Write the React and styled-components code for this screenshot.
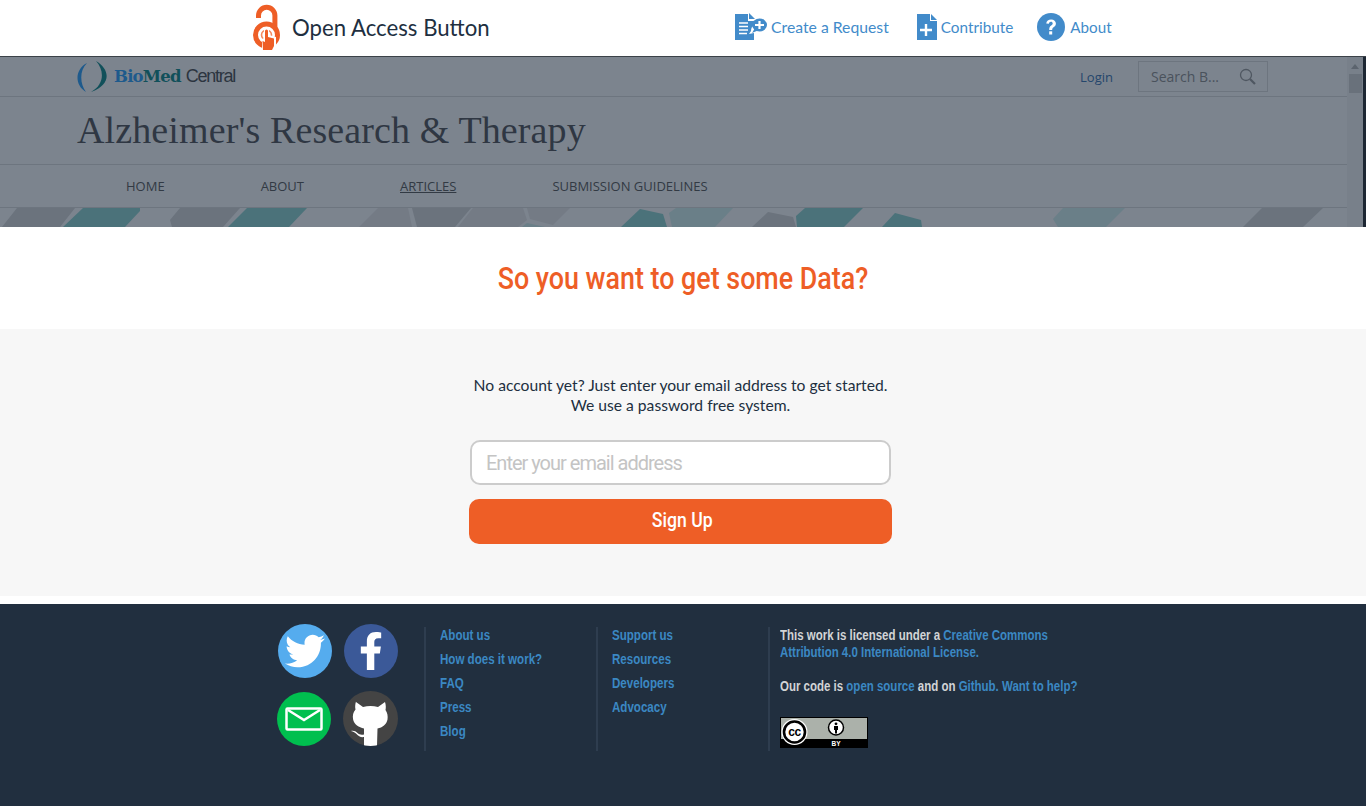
import React from 'react'
import styled, { createGlobalStyle } from 'styled-components'
import { FaTwitter, FaFacebookF } from 'react-icons/fa'

const Global = createGlobalStyle`
  html, body { margin: 0; padding: 0; background: #fff; }
  body { font-family: "Lato", "Liberation Sans", sans-serif; overflow: hidden; }
  a { text-decoration: none; }
`

const Page = styled.div`
  width: 1366px;
  height: 806px;
  overflow: hidden;
`

const TopBar = styled.header`
  height: 57px;
  display: flex;
  align-items: center;
  padding: 0 0 3px 253px;
  box-sizing: border-box;
  background: #fff;
  border-bottom: 1px solid #3b4148;
`

const Brand = styled.a`
  display: flex;
  align-items: center;
  width: 482px;
  padding-top: 2px;
  color: #212f3f;
  font-size: 22.2px;
  svg { margin-right: 11px; }
`

const TopLink = styled.a`
  display: flex;
  align-items: center;
  gap: ${p => p.$gap || 4}px;
  margin-right: ${p => p.$after || 0}px;
  color: #428bca;
  font-size: ${p => p.$font || 15.75}px;
`

const Backdrop = styled.section`
  position: relative;
  height: 170px;
  padding-right: 19px;
  background: #7c848e;
  box-sizing: border-box;
`

const Scroll = styled.div`
  position: absolute;
  top: 0;
  right: 0;
  bottom: 0;
  width: 19px;
  box-sizing: border-box;
  background: #78808a;
  border-right: 3px solid #1d2733;
`

const ScrollArrow = styled.div`
  position: absolute;
  top: 7px;
  left: 4px;
  border: 4px solid transparent;
  border-top-width: 0;
  border-bottom: 5px solid #5c646e;
`

const ScrollThumb = styled.div`
  position: absolute;
  top: 17px;
  left: 2px;
  width: 13px;
  height: 19px;
  background: #69717b;
`

const SiteBar = styled.div`
  height: 39px;
  display: flex;
  align-items: center;
  padding-left: 77px;
  border-bottom: 1px solid #6d757f;
`

const BmcLogo = styled.div`
  display: flex;
  align-items: center;
  flex: 1;
  font-family: "DejaVu Serif", serif;
  svg { margin-right: 5px; }
`

const Bio = styled.span`
  color: ${p => p.$c};
  font-weight: 700;
  font-size: 16.5px;
  letter-spacing: -0.8px;
`

const Central = styled.span`
  margin-left: 5px;
  color: #2c3540;
  font-family: "Liberation Sans", sans-serif;
  font-size: 18px;
  letter-spacing: -1.25px;
`

const Login = styled.a`
  margin-right: 25px;
  color: #24466c;
  font-family: "Open Sans", sans-serif;
  font-size: 13px;
`

const SearchBox = styled.div`
  width: 130px;
  height: 31px;
  margin-right: 79px;
  display: flex;
  align-items: center;
  justify-content: space-between;
  padding: 0 11px 0 12px;
  box-sizing: border-box;
  border: 1px solid #6d757f;
  color: #4a525c;
  font-family: "Open Sans", sans-serif;
  font-size: 14px;
`

const TitleRow = styled.div`
  height: 68px;
  display: flex;
  align-items: center;
  padding: 0 0 2px 77px;
  box-sizing: border-box;
  border-bottom: 1px solid #6d757f;
`

const Title = styled.h1`
  margin: 0;
  color: #2f3743;
  font-family: "Liberation Serif", serif;
  font-size: 38px;
  font-weight: 400;
  letter-spacing: 0.12px;
`

const SiteNav = styled.nav`
  height: 42px;
  display: flex;
  align-items: center;
  padding-left: 126px;
  gap: 96px;
  border-bottom: 1px solid #6d757f;
`

const SiteNavLink = styled.a`
  color: #323a44;
  font-family: "Open Sans", sans-serif;
  font-size: 13px;
  text-decoration: ${p => (p.$active ? 'underline' : 'none')};
`

const Banner = styled.svg`
  display: block;
`

const Intro = styled.div`
  height: 102px;
  display: flex;
  align-items: flex-start;
  justify-content: center;
  background: #fff;
`

const Heading = styled.h2`
  margin: 33px 0 0;
  color: #ee5e26;
  font-family: "Roboto", sans-serif;
  font-size: 31px;
  font-weight: 500;
  line-height: 38px;
  white-space: nowrap;
  transform: scaleX(0.866);
`

const FormArea = styled.section`
  height: 267px;
  display: flex;
  flex-direction: column;
  align-items: center;
  padding-top: 46px;
  padding-right: 5px;
  box-sizing: border-box;
  background: #f7f7f7;
`

const Lead = styled.p`
  margin: 0 0 25px;
  color: #212f3f;
  font-size: 15.65px;
  line-height: 20px;
  text-align: center;
`

const Email = styled.input`
  display: block;
  width: 421px;
  height: 45px;
  padding: 0 14px;
  box-sizing: border-box;
  border: 2px solid #ccc;
  border-radius: 10px;
  background: #fff;
  font-family: "Roboto", sans-serif;
  font-size: 20px;
  letter-spacing: -1px;
  outline: none;
  &::placeholder { color: #c4c4c4; opacity: 1; }
`

const SignUp = styled.button`
  width: 423px;
  height: 45px;
  margin-top: 14px;
  padding: 0 0 3px 3px;
  border: 0;
  border-radius: 10px;
  background: #ee5e26;
  color: #fff;
  font-family: "Roboto", sans-serif;
  font-size: 21px;
  font-weight: 500;
`

const SignUpLabel = styled.span`
  display: inline-block;
  transform: scaleX(0.84);
`

const Footer = styled.footer`
  height: 202px;
  margin-top: 8px;
  display: flex;
  padding: 20px 0 0 277px;
  box-sizing: border-box;
  background: #212f3f;
`

const Social = styled.div`
  display: grid;
  grid-template-columns: 54px 55px;
  grid-auto-rows: 54px;
  column-gap: 13px;
  row-gap: 14px;
  width: 148px;
`

const Round = styled.a`
  width: ${p => p.$size || 54}px;
  height: ${p => p.$size || 54}px;
  margin-top: ${p => p.$up || 0}px;
  margin-left: ${p => p.$right || 0}px;
  display: flex;
  align-items: center;
  justify-content: center;
  overflow: hidden;
  border-radius: 50%;
  background: ${p => p.$bg};
  color: #fff;
`

const FootCol = styled.div`
  width: ${p => p.$w}px;
  height: 124px;
  margin-top: 3px;
  margin-left: ${p => p.$pull || 0}px;
  padding-left: ${p => p.$pad}px;
  box-sizing: border-box;
  border-left: 2px solid #2e3d4f;
  font-family: "Liberation Sans", sans-serif;
  font-weight: 700;
`

const FootLink = styled.a`
  display: block;
  height: 24px;
  color: #3b88c3;
  font-size: 14px;
  line-height: 16px;
  transform: scaleX(0.826);
  transform-origin: 0 50%;
  white-space: nowrap;
`

const FootText = styled.p`
  width: 420px;
  margin: 0 0 17px;
  color: #d2d4d6;
  font-size: 14px;
  line-height: 17px;
  transform: scaleX(0.82);
  transform-origin: 0 50%;
  white-space: nowrap;
  a { color: #3b88c3; }
`

const Badge = styled.svg`
  display: block;
  margin-top: 22px;
`

function OabLogo() {
  return (
    <svg width="28" height="47" viewBox="0 0 28 47">
      <g fill="none" stroke="#ee5e26">
        <path d="M5.5 14V11.5a8.2 8.2 0 0 1 16.4 0V24" strokeWidth="5" />
        <circle cx="13.5" cy="31" r="11" strokeWidth="5" />
        <circle cx="13.5" cy="31" r="5" strokeWidth="1.6" stroke="#f58a60" />
      </g>
      <path fill="#fff" d="M9 46V35l2-1v-9l5 0v6l7 2v13z" />
      <path fill="#ee5e26" d="M10 46l-.5-9 2.5 1v-11a1.5 1.5 0 0 1 3 0v6l6 1.5V42l-2 4z" />
    </svg>
  )
}

function RequestIcon() {
  return (
    <svg width="32" height="27" viewBox="0 0 32 27">
      <path fill="#428bca" d="M0 1h13l0 7 7 0v4c-3 1-4 3-4 6l-2 3 5-1v7H0z" />
      <path fill="#428bca" d="M14 0l6 6h-6z" />
      <path stroke="#fff" strokeWidth="1.6" d="M4 10h9M4 13.5h9M4 17h9M4 20.5h8" />
      <ellipse cx="24.5" cy="12" rx="7.5" ry="6.5" fill="#428bca" />
      <path d="M17 20l3-5 4 2z" fill="#428bca" />
      <path stroke="#fff" strokeWidth="2.2" d="M20 12h9M24.5 8v8" />
    </svg>
  )
}

function ContributeIcon() {
  return (
    <svg width="20" height="26" viewBox="0 0 20 26">
      <path fill="#428bca" d="M0 0h13v7h7v19H0z" />
      <path fill="#428bca" d="M14 0l6 6h-6z" />
      <path stroke="#fff" strokeWidth="2.4" d="M3 16h12M9 10v12" />
    </svg>
  )
}

function AboutIcon() {
  return (
    <svg width="28" height="28" viewBox="0 0 28 28">
      <circle cx="14" cy="14" r="14" fill="#428bca" />
      <path d="M9.2 10.6c.3-2.8 2.3-4.2 4.9-4.2 2.9 0 4.8 1.7 4.8 4 0 1.8-.9 2.8-2.3 3.8-1.1.8-1.4 1.3-1.4 2.7h-3c0-2.3.5-3.3 2-4.4 1-.8 1.5-1.3 1.5-2.1 0-1-.8-1.6-1.8-1.6-1.2 0-1.8.8-2 2z" fill="#fff" />
      <rect x="12.2" y="18.3" width="3" height="3.2" fill="#fff" />
    </svg>
  )
}

function SearchGlyph() {
  return (
    <svg width="17" height="17" viewBox="0 0 17 17" fill="none" stroke="#4f5761">
      <circle cx="7" cy="7" r="5.5" strokeWidth="1.3" />
      <path d="M11 11l5 5" strokeWidth="2.2" />
    </svg>
  )
}

function BmcMark() {
  return (
    <svg width="32" height="32" viewBox="0 0 32 32">
      <path fill="#1e5a8c" d="M10 2C-2 8-3 24 9 31 3 23 2 10 10 2z" />
      <path fill="#11505a" d="M19 0c14 8 16 24-5 31 13-7 14-21 5-31z" />
    </svg>
  )
}

const dark = '#6b737d'
const mid = '#747b85'
const teal = '#4b727a'
const pale = '#6a7f88'

const shards = [
  ['17,0 75,0 60,19 2,19', dark],
  ['83,0 140,0 140,3 125,19 63,19', teal],
  ['180,0 240,0 223,19 172,19 170,12', dark],
  ['247,0 307,0 289,19 228,19', teal],
  ['378,0 408,0 412,19 359,19', mid],
  ['412,0 471,0 455,19 417,19', dark],
  ['473,0 523,0 527,12 518,19 458,19', mid],
  ['527,0 570,0 553,17 530,11', mid],
  ['527,15 545,19 522,19', pale],
  ['640,1 663,6 667,19 621,19', teal],
  ['669,5 676,0 733,0 715,19 672,19', pale],
  ['768,4 793,9 796,19 752,19', dark],
  ['805,0 863,0 844,19 797,19 796,8', teal],
  ['895,5 921,12 922,19 882,19', teal],
  ['1063,0 1125,0 1106,19 1058,19 1053,11', pale],
  ['1262,0 1323,0 1303,19 1243,19', dark],
]

function CcBadge() {
  return (
    <Badge width="88" height="31" viewBox="0 0 88 31">
      <rect width="88" height="31" fill="#000" />
      <rect x="1" y="1" width="86" height="21" fill="#abb1aa" />
      <circle cx="14.5" cy="15" r="13" fill="#fff" />
      <circle cx="14.5" cy="15" r="10.5" fill="#fff" stroke="#000" strokeWidth="2.6" />
      <text x="14.5" y="19" textAnchor="middle" fontFamily="Liberation Sans" fontWeight="700" fontSize="12" letterSpacing="-0.5" fill="#000">cc</text>
      <circle cx="56" cy="10.5" r="7.5" fill="#fff" stroke="#000" strokeWidth="1.5" />
      <circle cx="56" cy="6.8" r="1.4" fill="#000" />
      <path d="M54 9h4v4h-1v3.5h-2v-3.5h-1z" fill="#000" />
      <text x="56" y="29" textAnchor="middle" fontFamily="Liberation Sans" fontWeight="700" fontSize="6.5" fill="#fff">BY</text>
    </Badge>
  )
}

function GithubCat() {
  return (
    <svg width="55" height="55" viewBox="0 0 55 55">
      <path fill="#fff" d="M13 11l7 5c5-1.5 10-1.5 15 0l7-5c1 3 1 6 .5 8 2 3 2.5 6 2 9.5-1 5-5 8-10 9l-.5 17.5H21V46c-3 .5-5.5-.5-7.5-3-1.5-1.5-3-2.5-5.5-3 2.5-.5 4.500 0 6.500 2 1.500 1.500 3.500 2 6.500 1.500v-6c-5-1-10-4-11-9.500-.5-3.500 0-6.500 2.500-9.500-.5-2-.5-5 .5-8z" />
    </svg>
  )
}

export default function App() {
  return (
    <Page>
      <Global />
      <TopBar>
        <Brand href="#">
          <OabLogo />
          Open Access Button
        </Brand>
        <TopLink href="#" $after={28}><RequestIcon />Create a Request</TopLink>
        <TopLink href="#" $after={24} $font={15.3}><ContributeIcon />Contribute</TopLink>
        <TopLink href="#" $gap={5} $font={15.2}><AboutIcon />About</TopLink>
      </TopBar>

      <Backdrop>
        <SiteBar>
          <BmcLogo>
            <BmcMark />
            <Bio $c="#1e5a8c">Bio</Bio>
            <Bio $c="#11505a">Med</Bio>
            <Central>Central</Central>
          </BmcLogo>
          <Login href="#">Login</Login>
          <SearchBox>Search B...<SearchGlyph /></SearchBox>
        </SiteBar>
        <TitleRow>
          <Title>Alzheimer's Research &amp; Therapy</Title>
        </TitleRow>
        <SiteNav>
          <SiteNavLink href="#">HOME</SiteNavLink>
          <SiteNavLink href="#">ABOUT</SiteNavLink>
          <SiteNavLink href="#" $active>ARTICLES</SiteNavLink>
          <SiteNavLink href="#">SUBMISSION GUIDELINES</SiteNavLink>
        </SiteNav>
        <Banner width="1347" height="19" viewBox="0 0 1347 19">
          {shards.map(([points, fill]) => (
            <polygon key={points} points={points} fill={fill} />
          ))}
        </Banner>
        <Scroll>
          <ScrollArrow />
          <ScrollThumb />
        </Scroll>
      </Backdrop>

      <Intro>
        <Heading>So you want to get some Data?</Heading>
      </Intro>

      <FormArea>
        <Lead>
          No account yet? Just enter your email address to get started.<br />
          We use a password free system.
        </Lead>
        <Email type="email" placeholder="Enter your email address" />
        <SignUp><SignUpLabel>Sign Up</SignUpLabel></SignUp>
      </FormArea>

      <Footer>
        <Social>
          <Round href="#" $bg="#55acee" $right={1}><FaTwitter size={40} /></Round>
          <Round href="#" $bg="#3b5998"><FaFacebookF size={38} /></Round>
          <Round href="#" $bg="#00bf4f">
            <svg width="38" height="24" viewBox="0 0 38 24" fill="none" stroke="#fff" strokeWidth="2.5">
              <rect x="1.5" y="1.5" width="35" height="21" rx="1" />
              <path d="M3 3l16 10L35 3" />
            </svg>
          </Round>
          <Round href="#" $bg="#444" $size={55} $up={-1} $right={-1}><GithubCat /></Round>
        </Social>
        <FootCol $w={172} $pull={-1} $pad={14}>
          <FootLink href="#">About us</FootLink>
          <FootLink href="#">How does it work?</FootLink>
          <FootLink href="#">FAQ</FootLink>
          <FootLink href="#">Press</FootLink>
          <FootLink href="#">Blog</FootLink>
        </FootCol>
        <FootCol $w={172} $pad={14}>
          <FootLink href="#">Support us</FootLink>
          <FootLink href="#">Resources</FootLink>
          <FootLink href="#">Developers</FootLink>
          <FootLink href="#">Advocacy</FootLink>
        </FootCol>
        <FootCol $w={340} $pad={10}>
          <FootText>
            This work is licensed under a <a href="#">Creative Commons</a><br />
            <a href="#">Attribution 4.0 International License.</a>
          </FootText>
          <FootText>
            Our code is <a href="#">open source</a> and on <a href="#">Github.</a> <a href="#">Want to help?</a>
          </FootText>
          <CcBadge />
        </FootCol>
      </Footer>
    </Page>
  )
}
